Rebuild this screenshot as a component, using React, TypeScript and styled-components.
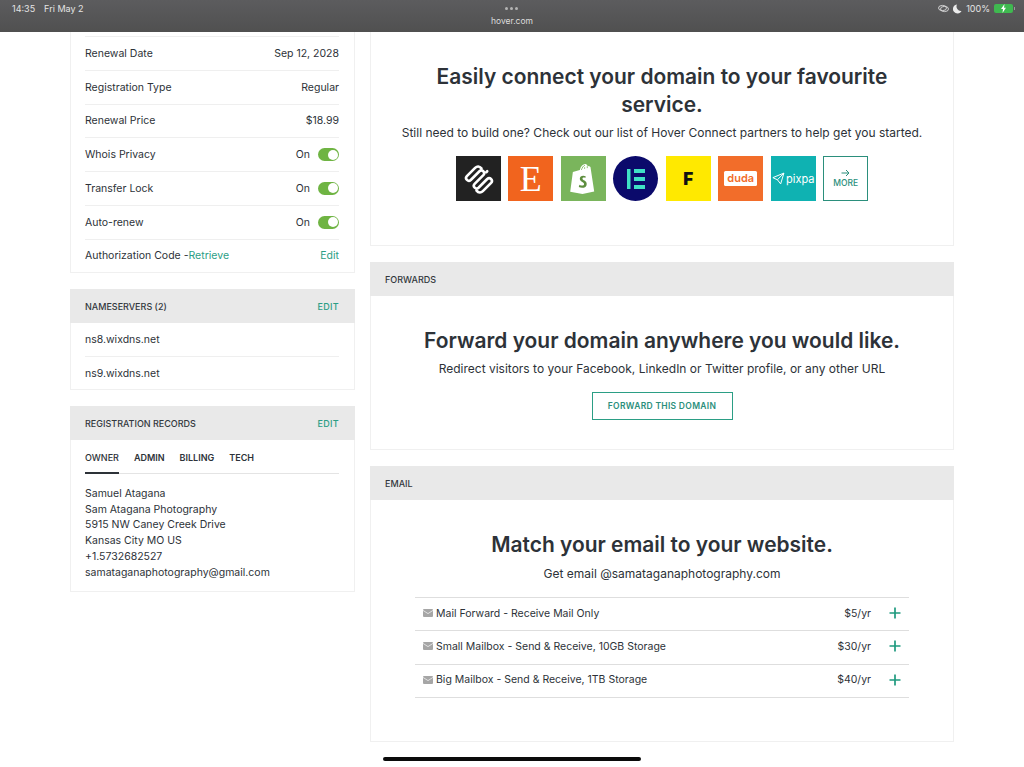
import * as React from 'react';
import styled, { createGlobalStyle } from 'styled-components';

var GlobalStyle = createGlobalStyle`
	html, body {
		margin: 0;
		padding: 0;
		background: #fff;
		font-family: Inter, "Liberation Sans", sans-serif;
		color: #2d3238;
	}
	* { box-sizing: border-box; }
`;

var Screen = styled.div`
	position: relative;
	width: 1024px;
	height: 767px;
	overflow: hidden;
	background: #fff;
`;

var StatusBar = styled.div`
	height: 32px;
	background: linear-gradient(#5c5c5e, #505050);
	color: #e4e4e4;
	display: grid;
	grid-template-columns: 1fr auto 1fr;
	padding: 0 12px;
	font-size: 9px;
`;

var StatusLeft = styled.div`
	display: flex;
	gap: 9px;
	padding-top: 3px;
	line-height: 11px;
`;

var StatusCenter = styled.div`
	display: flex;
	flex-direction: column;
	align-items: center;
	padding-top: 7px;
`;

var Dots = styled.div`
	display: flex;
	gap: 2px;
`;

var Dot = styled.span`
	width: 3px;
	height: 3px;
	border-radius: 50%;
	background: #b4b4b4;
`;

var Host = styled.div`
	margin-top: 5.5px;
	font-size: 8.5px;
	line-height: 11px;
	color: #dcdcdc;
`;

var StatusRight = styled.div`
	display: flex;
	justify-content: flex-end;
	align-items: flex-start;
	gap: 4px;
	padding-top: 3px;
	line-height: 11px;
	font-size: 9px;
	margin-right: -2px;
`;

var Battery = styled.div`
	position: relative;
	width: 19px;
	height: 9px;
	margin: 1px 1px 0 0;
	border-radius: 2px;
	background: #3fb950;
	display: flex;
	align-items: center;
	justify-content: center;

	&::after {
		content: '';
		position: absolute;
		right: -2px;
		top: 3px;
		width: 1px;
		height: 3px;
		background: #9a9a9a;
	}
`;

var Columns = styled.div`
	display: flex;
	align-items: flex-start;
	gap: 15px;
	padding-left: 70px;
`;

var LeftColumn = styled.div`
	width: 285px;
	display: flex;
	flex-direction: column;
	gap: 16px;
`;

var RightColumn = styled.div`
	width: 584px;
	display: flex;
	flex-direction: column;
	gap: 16px;
`;

var Card = styled.section`
	background: #fff;
	border: 1px solid #f0f0f0;
	border-top: none;
`;

var CardHeader = styled.div`
	height: 34px;
	background: #e9e9e9;
	margin: 0 -1px;
	padding: 0 16px 0 15px;
	display: flex;
	align-items: center;
	justify-content: space-between;
	font-size: 9px;
	font-weight: 500;
	color: #33383d;
`;

var HeaderEdit = styled.span`
	color: #2b9e85;
	font-weight: 500;
	font-size: 9px;
	letter-spacing: 0.3px;
`;

var Rows = styled.div<{ $top?: number }>`
	padding: ${(p) => p.$top ?? 0}px 15px 0 14px;
`;

var Row = styled.div<{ $noLine?: boolean; $h?: number }>`
	height: ${(p) => p.$h ?? 33.75}px;
	display: flex;
	align-items: center;
	justify-content: space-between;
	font-size: 10.5px;
	border-top: ${(p) => (p.$noLine ? 'none' : '1px solid #efefef')};
`;

var Inline = styled.div`
	display: flex;
	align-items: center;
`;

var Green = styled.span`
	color: #2b9e85;
`;

var OnLabel = styled.span`
	margin-right: 8px;
`;

var Toggle = styled.span`
	position: relative;
	width: 21px;
	height: 13px;
	border-radius: 7px;
	background: #6fb443;
`;

var Knob = styled.span`
	position: absolute;
	right: 1.5px;
	top: 1.5px;
	width: 10px;
	height: 10px;
	border-radius: 50%;
	background: #fff;
`;

var Tabs = styled.div`
	margin: 0 15px 0 14px;
	height: 34px;
	display: flex;
	gap: 15px;
	border-bottom: 1px solid #e4e4e4;
`;

var Tab = styled.div<{ $active?: boolean }>`
	height: 34px;
	display: flex;
	align-items: center;
	font-size: 9px;
	font-weight: ${(p) => (p.$active ? 500 : 600)};
	padding-top: ${(p) => (p.$active ? 2 : 0)}px;
	border-bottom: ${(p) => (p.$active ? '2px solid #2d3238' : 'none')};
`;

var Address = styled.div`
	padding: 11.5px 15px 10.5px 14px;
	font-size: 10.5px;
	line-height: 15.75px;
`;

var Promo = styled.div<{ $pad: string }>`
	padding: ${(p) => p.$pad};
	display: flex;
	flex-direction: column;
	align-items: center;
	text-align: center;
`;

var Heading = styled.h2<{ $width?: number }>`
	margin: 0;
	font-size: 20.95px;
	line-height: 28px;
	font-weight: 600;
	color: #2d3238;
	max-width: ${(p) => p.$width ?? 540}px;
`;

var Subtext = styled.p<{ $top?: number }>`
	margin: ${(p) => p.$top ?? 5}px 0 0;
	font-size: 12px;
	line-height: 17px;
	color: #2d3238;
`;

var Logos = styled.div`
	display: flex;
	gap: 7.5px;
	margin-top: 15px;
`;

var Logo = styled.div<{ $bg: string; $round?: boolean }>`
	width: 45px;
	height: 45px;
	background: ${(p) => p.$bg};
	border-radius: ${(p) => (p.$round ? '50%' : '0')};
	display: flex;
	align-items: center;
	justify-content: center;
	flex: none;
`;

var EtsyE = styled.span`
	font-family: "Liberation Serif", serif;
	font-size: 36px;
	color: #fff;
	line-height: 1;
`;

var FanLetter = styled.span`
	font-size: 17px;
	font-weight: 900;
	color: #111;
`;

var DudaPill = styled.span`
	background: #fff;
	color: #f26d2a;
	font-size: 11px;
	font-weight: 600;
	line-height: 14.5px;
	padding: 0 3px;
	border-radius: 1.5px;
`;

var PixpaMark = styled.span`
	display: flex;
	align-items: center;
	gap: 1px;
	color: #fff;
	font-size: 11px;
`;

var MoreTile = styled.div`
	width: 45px;
	height: 45px;
	border: 1.5px solid #2b8f7c;
	display: flex;
	flex-direction: column;
	align-items: center;
	justify-content: center;
	color: #2b8f7c;
	font-size: 8.5px;
	font-weight: 500;
	line-height: 10px;
	gap: 1px;
`;

var OutlineButton = styled.div`
	margin-top: 15px;
	width: 141px;
	height: 28px;
	border: 1.5px solid #2b9e85;
	display: flex;
	align-items: center;
	justify-content: center;
	font-size: 8.5px;
	font-weight: 600;
	letter-spacing: 0.3px;
	color: #2b8f7c;
`;

var Plans = styled.div`
	width: 494px;
	margin-top: 15px;
	border-bottom: 1px solid #dedede;
`;

var Plan = styled.div`
	height: 33.3px;
	border-top: 1px solid #dedede;
	display: flex;
	align-items: center;
	font-size: 10.5px;
	padding: 0 0 2px 8px;
`;

var PlanName = styled.span`
	flex: 1;
	margin-left: 3px;
	text-align: left;
`;

var PlanPrice = styled.span`
	margin-right: 18px;
`;

var PlusWrap = styled.span`
	display: flex;
	width: 12px;
	margin-right: 8px;
`;

var HomeIndicator = styled.div`
	position: absolute;
	left: 383px;
	bottom: 6px;
	width: 258px;
	height: 4px;
	border-radius: 2px;
	background: #0a0a0a;
`;

function SwitchRow({ label }: { label: string }) {
	return (
		<Row>
			<span>{label}</span>
			<Inline>
				<OnLabel>On</OnLabel>
				<Toggle>
					<Knob />
				</Toggle>
			</Inline>
		</Row>
	);
}

function MailIcon() {
	return (
		<svg width="10" height="8" viewBox="0 0 10 8">
			<rect width="10" height="8" rx="1" fill="#a6a6a6" />
			<path d="M0 1.4 5 4.6 10 1.4" fill="none" stroke="#e8e8e8" strokeWidth="0.9" />
		</svg>
	);
}

function PlusIcon() {
	return (
		<svg width="12" height="12" viewBox="0 0 12 12">
			<path d="M6 .5v11M.5 6h11" stroke="#1f9a7f" strokeWidth="1.7" />
		</svg>
	);
}

function SquarespaceLogo() {
	return (
		<svg width="31" height="31" viewBox="0 0 32 32" fill="none" stroke="#fff" strokeWidth="2.7" strokeLinecap="round" strokeLinejoin="round">
			<path d="M19 5.500C17 3 14.500 3 12.500 5L4 13.500a2.830 2.830 0 0 0 4 4L17 8.500a2.830 2.830 0 0 1 4 4L12 21.500a2.830 2.830 0 0 0 4 4L25 16.500a2.830 2.830 0 0 1 4 4L20.500 29C18.500 31 16 31 14 28.500" />
			<path d="M25 8.500 24 9.500" />
			<path d="M8 24.500 7 25.500" opacity="0" />
		</svg>
	);
}

function ShopifyLogo() {
	return (
		<svg width="28" height="32" viewBox="0 0 26 30">
			<path d="M3.500 8.500 10 6.500C11 3 13 1 15 1c1.500 0 2 1 2.300 1.800L19 3l1 .8 3.500 23L12.500 29 1 27Z" fill="#fff" />
			<path d="M11.500 6.500c.6-2 1.800-4 3.300-4.300M14.500 5.500V4M17 4.800V3" stroke="#7ab55c" strokeWidth="0.8" fill="none" />
			<path d="M15.500 12.500c-3-1.300-5.500 0-5.500 2.200 0 2.800 4 2.800 4 5 0 1.800-2.500 1.800-4.300.6l-.7 2.300c3.500 1.500 7.500.5 7.500-3 0-3.200-4-3.200-4-5 0-1 1.500-1.300 2.700-.6Z" fill="#5e8e3e" />
		</svg>
	);
}

function ElementorLogo() {
	return (
		<svg width="24" height="24" viewBox="0 0 24 24" fill="#3fe0c5">
			<rect x="3" y="2" width="3.500" height="20" />
			<rect x="10" y="2" width="11" height="4" />
			<rect x="10" y="10" width="11" height="4" />
			<rect x="10" y="18" width="11" height="4" />
		</svg>
	);
}

function PlaneIcon() {
	return (
		<svg width="13" height="13" viewBox="0 0 12 12" fill="none" stroke="#fff" strokeWidth="0.9" strokeLinejoin="round">
			<path d="M.8 5.200 11 1 8 11 5 7.200Z" />
			<path d="M5 7.200 11 1" />
		</svg>
	);
}

function ArrowIcon() {
	return (
		<svg width="9" height="8" viewBox="0 0 9 8" fill="none" stroke="#2b8f7c" strokeWidth="1">
			<path d="M.5 4h7.500M5 1l3 3-3 3" />
		</svg>
	);
}

function EyeIcon() {
	return (
		<svg width="11" height="11" viewBox="0 0 11 11" fill="none" stroke="#dcdcdc" strokeWidth="0.9">
			<ellipse cx="4.500" cy="5" rx="4" ry="2.600" />
			<ellipse cx="6.500" cy="6" rx="4" ry="2.600" />
		</svg>
	);
}

function MoonIcon() {
	return (
		<svg width="9" height="10" viewBox="0 0 9 10" style={{ marginTop: 1 }}>
			<path d="M4 .5a4.500 4.500 0 1 0 4.500 6.500A4.500 4.500 0 0 1 4 .5Z" fill="#ececec" />
		</svg>
	);
}

function BoltIcon() {
	return (
		<svg width="7" height="9" viewBox="0 0 7 9">
			<path d="M4.500 0 1 5h2L2.500 9 6 3.800H4Z" fill="#fff" />
		</svg>
	);
}

export default function App() {
	return (
		<Screen>
			<GlobalStyle />
			<StatusBar>
				<StatusLeft>
					<span>14:35</span>
					<span>Fri May 2</span>
				</StatusLeft>
				<StatusCenter>
					<Dots>
						<Dot />
						<Dot />
						<Dot />
					</Dots>
					<Host>hover.com</Host>
				</StatusCenter>
				<StatusRight>
					<EyeIcon />
					<MoonIcon />
					<span>100%</span>
					<Battery>
						<BoltIcon />
					</Battery>
				</StatusRight>
			</StatusBar>
			<Columns>
				<LeftColumn>
					<Card>
						<Rows $top={4}>
							<Row>
								<span>Renewal Date</span>
								<span>Sep 12, 2028</span>
							</Row>
							<Row>
								<span>Registration Type</span>
								<span>Regular</span>
							</Row>
							<Row>
								<span>Renewal Price</span>
								<span>$18.99</span>
							</Row>
							<SwitchRow label="Whois Privacy" />
							<SwitchRow label="Transfer Lock" />
							<SwitchRow label="Auto-renew" />
							<Row>
								<Inline>
									Authorization Code -<Green>Retrieve</Green>
								</Inline>
								<Green>Edit</Green>
							</Row>
						</Rows>
					</Card>
					<Card>
						<CardHeader>
							<span>NAMESERVERS (2)</span>
							<HeaderEdit>EDIT</HeaderEdit>
						</CardHeader>
						<Rows>
							<Row $noLine $h={33}>ns8.wixdns.net</Row>
							<Row $h={33}>ns9.wixdns.net</Row>
						</Rows>
					</Card>
					<Card>
						<CardHeader>
							<span>REGISTRATION RECORDS</span>
							<HeaderEdit>EDIT</HeaderEdit>
						</CardHeader>
						<Tabs>
							<Tab $active>OWNER</Tab>
							<Tab>ADMIN</Tab>
							<Tab>BILLING</Tab>
							<Tab>TECH</Tab>
						</Tabs>
						<Address>
							Samuel Atagana
							<br />
							Sam Atagana Photography
							<br />
							5915 NW Caney Creek Drive
							<br />
							Kansas City MO US
							<br />
							+1.5732682527
							<br />
							samataganaphotography@gmail.com
						</Address>
					</Card>
				</LeftColumn>
				<RightColumn>
					<Card>
						<Promo $pad="31px 15px 44px">
							<Heading $width={500}>Easily connect your domain to your favourite service.</Heading>
							<Subtext>Still need to build one? Check out our list of Hover Connect partners to help get you started.</Subtext>
							<Logos>
								<Logo $bg="#222222">
									<SquarespaceLogo />
								</Logo>
								<Logo $bg="#f1641e">
									<EtsyE>E</EtsyE>
								</Logo>
								<Logo $bg="#7ab55c">
									<ShopifyLogo />
								</Logo>
								<Logo $bg="#0b0a6b" $round>
									<ElementorLogo />
								</Logo>
								<Logo $bg="#ffe900">
									<FanLetter>F</FanLetter>
								</Logo>
								<Logo $bg="#f26d2a">
									<DudaPill>duda</DudaPill>
								</Logo>
								<Logo $bg="#0fb2b2">
									<PixpaMark>
										<PlaneIcon />
										pixpa
									</PixpaMark>
								</Logo>
								<MoreTile>
									<ArrowIcon />
									MORE
								</MoreTile>
							</Logos>
						</Promo>
					</Card>
					<Card>
						<CardHeader>
							<span>FORWARDS</span>
						</CardHeader>
						<Promo $pad="31px 15px 29px">
							<Heading>Forward your domain anywhere you would like.</Heading>
							<Subtext>Redirect visitors to your Facebook, LinkedIn or Twitter profile, or any other URL</Subtext>
							<OutlineButton>FORWARD THIS DOMAIN</OutlineButton>
						</Promo>
					</Card>
					<Card>
						<CardHeader>
							<span>EMAIL</span>
						</CardHeader>
						<Promo $pad="31px 15px 43px">
							<Heading>Match your email to your website.</Heading>
							<Subtext $top={6}>Get email @samataganaphotography.com</Subtext>
							<Plans>
								<Plan>
									<MailIcon />
									<PlanName>Mail Forward - Receive Mail Only</PlanName>
									<PlanPrice>$5/yr</PlanPrice>
									<PlusWrap>
										<PlusIcon />
									</PlusWrap>
								</Plan>
								<Plan>
									<MailIcon />
									<PlanName>Small Mailbox - Send &amp; Receive, 10GB Storage</PlanName>
									<PlanPrice>$30/yr</PlanPrice>
									<PlusWrap>
										<PlusIcon />
									</PlusWrap>
								</Plan>
								<Plan>
									<MailIcon />
									<PlanName>Big Mailbox - Send &amp; Receive, 1TB Storage</PlanName>
									<PlanPrice>$40/yr</PlanPrice>
									<PlusWrap>
										<PlusIcon />
									</PlusWrap>
								</Plan>
							</Plans>
						</Promo>
					</Card>
				</RightColumn>
			</Columns>
			<HomeIndicator />
		</Screen>
	);
}
